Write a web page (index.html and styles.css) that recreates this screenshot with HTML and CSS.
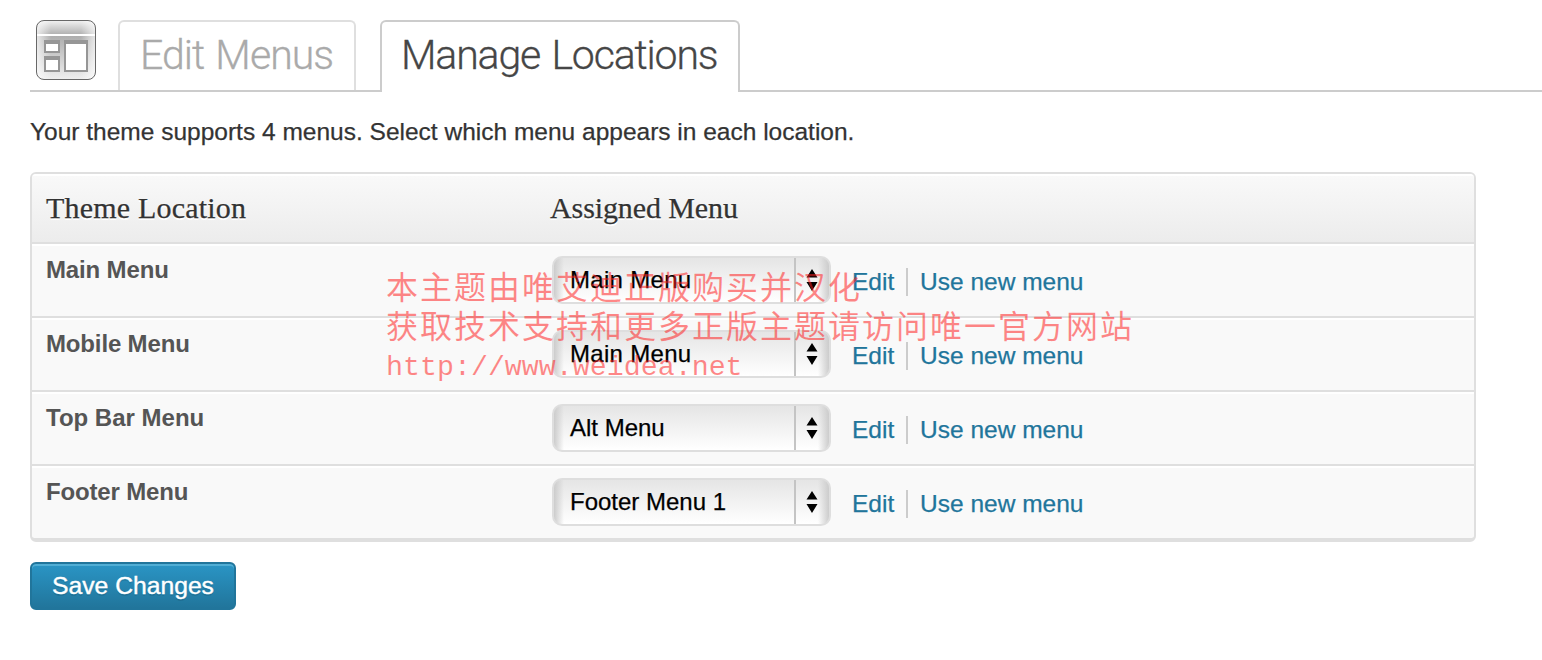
FILE: index.html
```html
<!DOCTYPE html>
<html lang="en">
<head>
<meta charset="utf-8">
<title>Manage Locations</title>
<link rel="stylesheet" href="styles.css">
</head>
<body>
<header class="tabs">
  <svg class="tabs-icon" width="60" height="61" viewBox="0 0 60 61">
    <defs>
      <linearGradient id="top" x1="0" y1="0" x2="0" y2="1"><stop offset="0" stop-color="#f4f4f4"/><stop offset="1" stop-color="#aeaeae"/></linearGradient>
      <linearGradient id="body" x1="0" y1="0" x2="0" y2="1"><stop offset="0" stop-color="#acacac"/><stop offset="1" stop-color="#f0f0f0"/></linearGradient>
      <linearGradient id="side" x1="0" y1="0" x2="1" y2="0"><stop offset="0" stop-color="#fff" stop-opacity=".75"/><stop offset=".25" stop-color="#fff" stop-opacity="0"/><stop offset=".75" stop-color="#fff" stop-opacity="0"/><stop offset="1" stop-color="#fff" stop-opacity=".75"/></linearGradient>
      <clipPath id="round"><rect width="60" height="60" rx="8"/></clipPath>
    </defs>
    <g clip-path="url(#round)">
      <rect width="60" height="15" fill="url(#top)"/>
      <rect y="15" width="60" height="45" fill="url(#body)"/>
      <rect width="60" height="60" fill="url(#side)"/>
      <rect y="14" width="60" height="2" fill="#fff"/>
    </g>
    <rect x=".5" y=".5" width="59" height="59" rx="7.5" fill="none" stroke="#686868"/>
    <path d="M8 20h16v13H8zM8 36h16v16H8zM28 20h24v32H28z" fill="#969696"/>
    <path d="M10 24h12v7H10zM10 40h12v10H10zM30 24h20v26H30z" fill="#fff"/>
  </svg>
  <a class="tab tab-edit"><span>Edit Menus</span></a>
  <a class="tab tab-active"><span>Manage Locations</span></a>
</header>
<p class="intro">Your theme supports 4 menus. Select which menu appears in each location.</p>
<section class="table">
  <div class="row head"><span>Theme Location</span><span class="head-menu">Assigned Menu</span></div>
  <div class="row">
    <strong>Main Menu</strong>
    <div class="select"><span class="wide">Main Menu</span><i><svg width="12" height="22" viewBox="0 0 12 22"><path d="M6 0l5.5 8.5H.5zM6 22L.5 13h11z"/></svg></i></div>
    <a class="edit">Edit</a><a class="new">Use new menu</a>
  </div>
  <div class="row">
    <strong>Mobile Menu</strong>
    <div class="select"><span class="wide">Main Menu</span><i><svg width="12" height="22" viewBox="0 0 12 22"><path d="M6 0l5.5 8.5H.5zM6 22L.5 13h11z"/></svg></i></div>
    <a class="edit">Edit</a><a class="new">Use new menu</a>
  </div>
  <div class="row">
    <strong class="top-bar">Top Bar Menu</strong>
    <div class="select"><span>Alt Menu</span><i><svg width="12" height="22" viewBox="0 0 12 22"><path d="M6 0l5.5 8.5H.5zM6 22L.5 13h11z"/></svg></i></div>
    <a class="edit">Edit</a><a class="new">Use new menu</a>
  </div>
  <div class="row">
    <strong>Footer Menu</strong>
    <div class="select"><span>Footer Menu 1</span><i><svg width="12" height="22" viewBox="0 0 12 22"><path d="M6 0l5.5 8.5H.5zM6 22L.5 13h11z"/></svg></i></div>
    <a class="edit">Edit</a><a class="new">Use new menu</a>
  </div>
</section>
<button class="save">Save Changes</button>
<div class="watermark">
  <div>本主题由唯艾迪正版购买并汉化</div>
  <div>获取技术支持和更多正版主题请访问唯一官方网站</div>
  <div class="url">http://www.weidea.net</div>
</div>
</body>
</html>
```
FILE: styles.css
```css
* { box-sizing: border-box; }
body {
  margin: 0;
  width: 1542px;
  height: 660px;
  padding: 20px 0 0 30px;
  position: relative;
  overflow: hidden;
  background: #fff;
  color: #333;
  font: 24.5px/34px "Liberation Sans", Arial, sans-serif;
  -webkit-text-stroke: .25px;
}
.tabs {
  display: flex;
  height: 72px;
  border-bottom: 2px solid #ccc;
}
.tabs-icon { margin: 0 22px 0 6px; }
.tab {
  border: 2px solid #dfdfdf;
  border-bottom: 0;
  border-radius: 6px 6px 0 0;
  height: 70px;
  padding-left: 19px;
  font: 300 41px/66px Roboto, sans-serif;
  white-space: nowrap;
  color: #aaa;
  -webkit-text-stroke: .3px;
}
.tab-edit { width: 238px; margin-right: 24px; padding-left: 20px; letter-spacing: -.95px; word-spacing: 2px; }
.tab-active {
  width: 360px;
  height: 72px;
  border-color: #ccc;
  background: #fff;
  color: #464646;
  letter-spacing: -1.15px;
  word-spacing: 2.5px;
}
.intro { margin: 23px 0 0; white-space: nowrap; }
.table {
  width: 1446px;
  height: 370px;
  margin-top: 23px;
  border: 2px solid #dfdfdf;
  border-bottom-width: 4px;
  border-radius: 6px;
  background: #f9f9f9;
  overflow: hidden;
}
.row {
  display: grid;
  grid-template-columns: 507px 278px 76px 1fr;
  height: 74px;
  padding: 12px 0 0 14px;
  border-top: 2px solid #fff;
  border-bottom: 2px solid #dfdfdf;
}
.row:last-child { border-bottom: 0; }
.head {
  height: 70px;
  padding-top: 15px;
  grid-template-columns: 504px 1fr;
  background: linear-gradient(#f9f9f9, #ececec);
  font: 30px/34px "Liberation Serif", Georgia, serif;
  letter-spacing: .2px;
  text-shadow: 0 2px 0 #fff;
}
.head-menu { letter-spacing: -.1px; }
.row strong { color: #555; font-size: 24px; line-height: 24px; letter-spacing: -.15px; -webkit-text-stroke: 0; }
.row .top-bar { letter-spacing: 0; }
.select {
  display: flex;
  width: 279px;
  height: 48px;
  margin: -2px 0 0 -1px;
  border: 2px solid #dedede;
  border-radius: 10px;
  background: linear-gradient(90deg, #ccc, rgba(220,220,220,0) 10px, rgba(220,220,220,0) 264px, #ccc), linear-gradient(#e5e5e5, #fff);
  color: #000;
}
.select span { width: 242px; padding-left: 16px; font-size: 24px; line-height: 44px; border-right: 2px solid #c4c4c4; }
.select .wide { letter-spacing: .3px; }
.select i { display: flex; padding: 11px 0 0 10px; }
.edit, .new { color: #21759b; line-height: 28px; height: 28px; margin-top: 10px; }
.edit { margin-left: 20px; border-right: 2px solid #ccc; }
.row .edit { width: 57px; padding-left: 1px; }
.new { margin-left: 13px; }
.save {
  display: block;
  width: 206px;
  height: 48px;
  margin-top: 20px;
  padding: 0;
  border: 2px solid #21759b;
  border-radius: 6px;
  background: linear-gradient(#2a95c5, #21759b);
  box-shadow: inset 0 2px 0 rgba(120,200,230,.5);
  color: #fff;
  font: 24.7px/44px "Liberation Sans", Arial, sans-serif;
  -webkit-text-stroke: .4px;
  text-shadow: 0 2px 0 rgba(0,0,0,.1);
}
.watermark {
  position: absolute;
  left: 386px;
  top: 266px;
  color: rgba(255,30,30,.53);
  font: 400 32px/39px "Noto Sans CJK SC", sans-serif;
  letter-spacing: 2px;
  white-space: nowrap;
  -webkit-text-stroke: 0;
}
.url { font-family: "Liberation Mono", monospace; font-size: 28.3px; line-height: 46px; letter-spacing: 0; }
```
